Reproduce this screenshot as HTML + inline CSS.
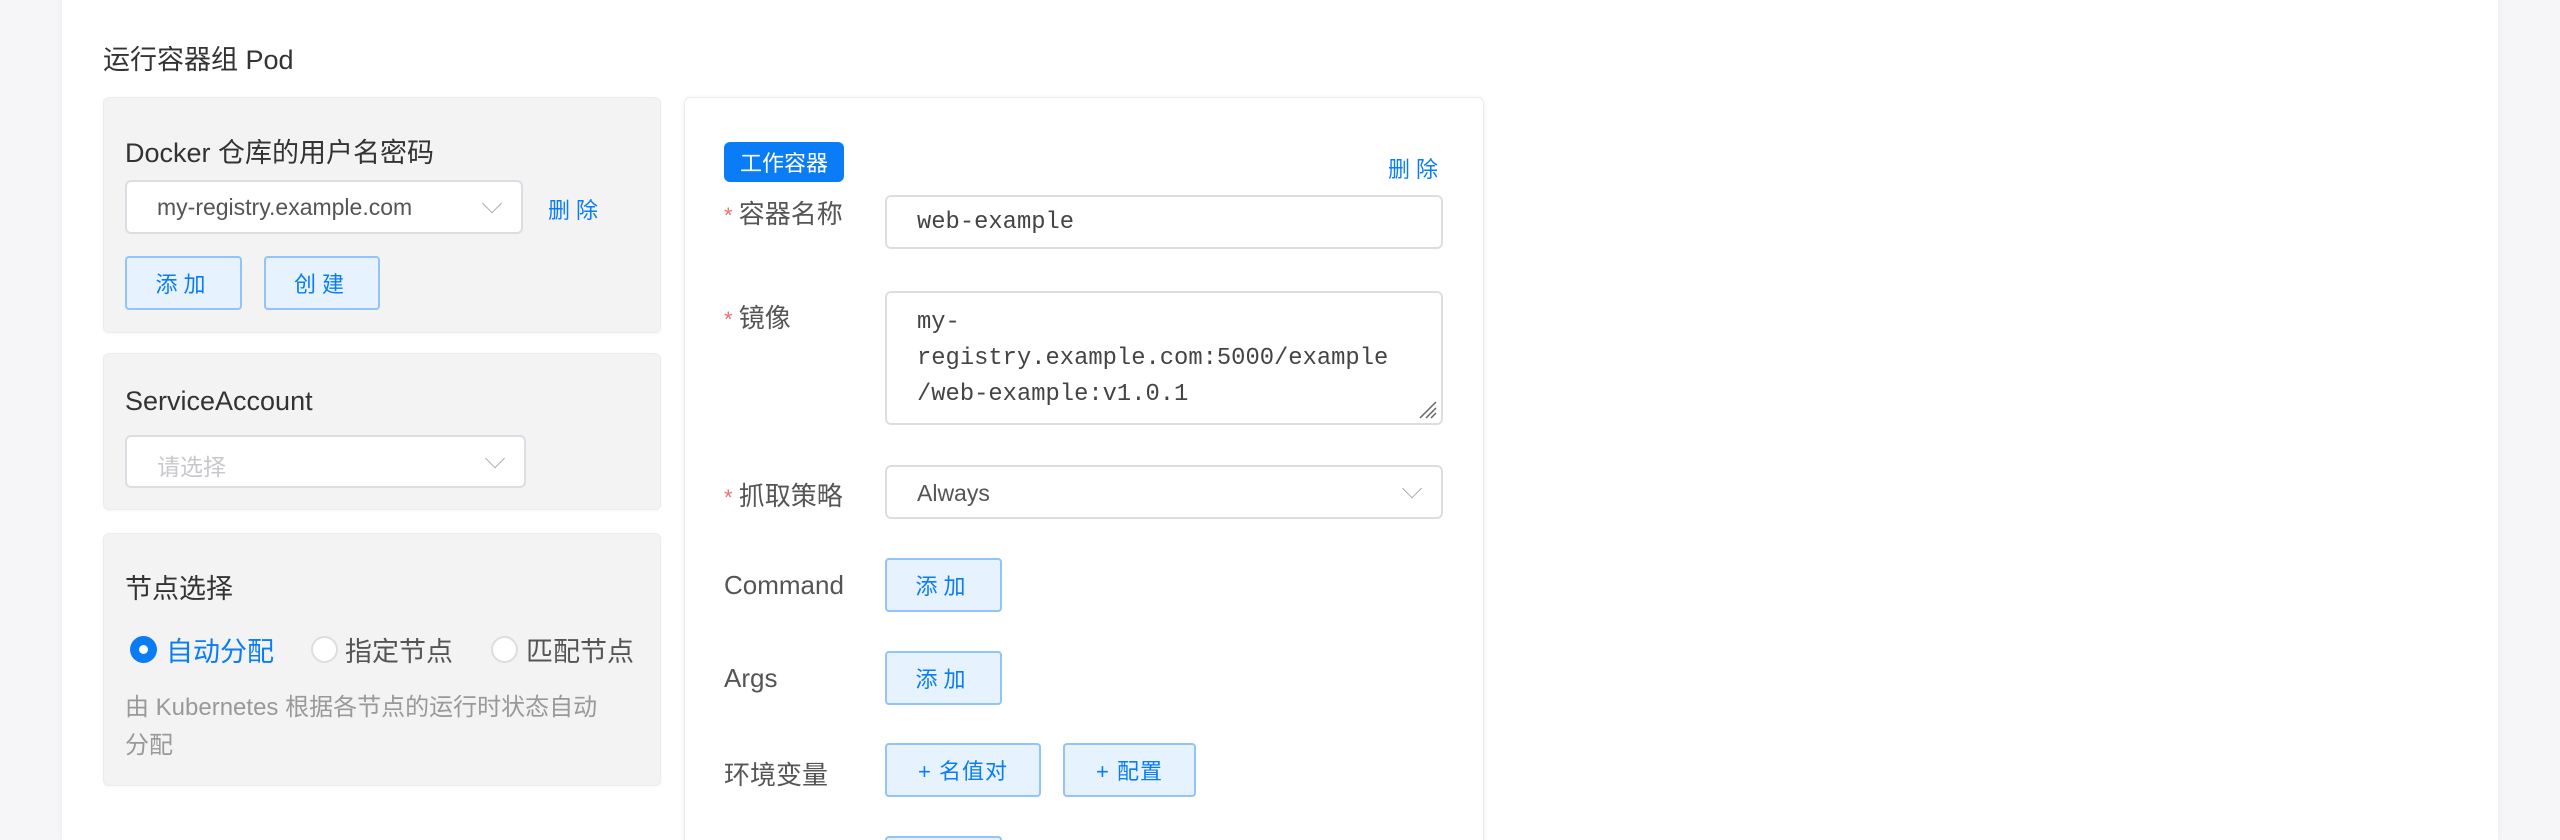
<!DOCTYPE html>
<html style="height:840px;overflow:hidden"><head><meta charset="utf-8"><style>
*{box-sizing:border-box;margin:0;padding:0}
body{width:2560px;height:840px;background:#f6f6f8;position:relative;overflow:hidden;font-family:"Liberation Sans","Noto Sans CJK SC",sans-serif;color:#333}
.a{position:absolute}
.card{left:62px;top:-10px;width:2436px;height:850px;background:#fff;box-shadow:0 0 6px rgba(0,0,0,.06)}
.panel{background:#f3f3f4;border:1px solid #ececee;border-radius:6px;left:103px;width:558px;box-shadow:0 1px 3px rgba(0,0,0,.04)}
.t{font-size:27px;color:#333;white-space:nowrap}
.sel{background:#fff;border:2px solid #dcdde2;border-radius:6px}
.chev{position:absolute;right:22px;top:50%;width:14px;height:14px;border-right:1.5px solid #aab;border-bottom:1.5px solid #aab;transform:translateY(-75%) rotate(45deg)}
.btn{background:#e6f2fe;border:2px solid #92c3f9;border-radius:4px;color:#0a7cf5;font-size:22px;display:flex;align-items:center;justify-content:center;letter-spacing:6px;white-space:nowrap}
.lbl{font-size:26px;color:#555;white-space:nowrap}
.star{color:#f56c6c;font-size:22px}
.blue{color:#0a7cf5}
.mono{font-family:"Liberation Mono","DejaVu Sans Mono",monospace;font-size:23.8px;color:#444}
</style></head><body>
<div class="a card"></div>
<div class="a t" style="left:103px;top:38px">运行容器组 Pod</div>

<div class="a panel" style="top:97px;height:236px"></div>
<div class="a t" style="left:125px;top:131px">Docker 仓库的用户名密码</div>
<div class="a sel" style="left:125px;top:180px;width:398px;height:54px"><span class="a" style="left:30px;top:12px;font-size:23px;color:#555">my-registry.example.com</span><i class="chev"></i></div>
<div class="a blue" style="left:548px;top:193px;font-size:22px;letter-spacing:6px">删除</div>
<div class="a btn" style="left:125px;top:256px;width:117px;height:54px">添加</div>
<div class="a btn" style="left:264px;top:256px;width:116px;height:54px">创建</div>

<div class="a panel" style="top:353px;height:157px"></div>
<div class="a t" style="left:125px;top:386px">ServiceAccount</div>
<div class="a sel" style="left:125px;top:435px;width:401px;height:53px"><span class="a" style="left:30px;top:11px;font-size:23px;color:#c8c8cc">请选择</span><i class="chev"></i></div>

<div class="a panel" style="top:533px;height:253px"></div>
<div class="a t" style="left:125px;top:567px">节点选择</div>
<div class="a" style="left:130px;top:636px;width:27px;height:27px;border-radius:50%;background:#0a7cf5"><div class="a" style="left:9px;top:9px;width:9px;height:9px;border-radius:50%;background:#fff"></div></div>
<div class="a blue" style="left:166px;top:630px;font-size:27px">自动分配</div>
<div class="a" style="left:311px;top:636px;width:27px;height:27px;border-radius:50%;background:#fff;border:2px solid #dcdde2"></div>
<div class="a" style="left:345px;top:630px;font-size:27px;color:#555">指定节点</div>
<div class="a" style="left:491px;top:636px;width:27px;height:27px;border-radius:50%;background:#fff;border:2px solid #dcdde2"></div>
<div class="a" style="left:526px;top:630px;font-size:27px;color:#555">匹配节点</div>
<div class="a" style="left:125px;top:689px;font-size:24px;line-height:38px;color:#999;white-space:nowrap">由 Kubernetes 根据各节点的运行时状态自动<br>分配</div>

<div class="a" style="left:684px;top:97px;width:800px;height:760px;background:#fff;border:1px solid #ececf0;border-radius:6px;box-shadow:0 1px 6px rgba(0,0,0,.06)"></div>
<div class="a" style="left:724px;top:142px;width:120px;height:40px;background:#0a7cf5;border-radius:6px;color:#fff;font-size:22px;display:flex;align-items:center;justify-content:center">工作容器</div>
<div class="a blue" style="left:1388px;top:152px;font-size:22px;letter-spacing:6px">删除</div>

<div class="a lbl" style="left:724px;top:194px"><span class="star">* </span>容器名称</div>
<div class="a sel" style="left:885px;top:195px;width:558px;height:54px"><span class="a mono" style="left:30px;top:12px">web-example</span></div>

<div class="a lbl" style="left:724px;top:298px"><span class="star">* </span>镜像</div>
<div class="a sel" style="left:885px;top:291px;width:558px;height:134px"><div class="a mono" style="left:30px;top:12px;line-height:36px">my-<br>registry.example.com:5000/example<br>/web-example:v1.0.1</div>
<svg class="a" style="right:3px;bottom:3px" width="20" height="20"><path d="M2 18L18 2M8 18L18 8M13 18L18 13" stroke="#666" stroke-width="1.5"/></svg></div>

<div class="a lbl" style="left:724px;top:476px"><span class="star">* </span>抓取策略</div>
<div class="a sel" style="left:885px;top:465px;width:558px;height:54px"><span class="a" style="left:30px;top:13px;font-size:23px;color:#555">Always</span><i class="chev"></i></div>

<div class="a lbl" style="left:724px;top:570px">Command</div>
<div class="a btn" style="left:885px;top:558px;width:117px;height:54px">添加</div>
<div class="a lbl" style="left:724px;top:663px">Args</div>
<div class="a btn" style="left:885px;top:651px;width:117px;height:54px">添加</div>
<div class="a lbl" style="left:724px;top:755px">环境变量</div>
<div class="a btn" style="left:885px;top:743px;width:156px;height:54px;letter-spacing:1px">+ 名值对</div>
<div class="a btn" style="left:1063px;top:743px;width:133px;height:54px;letter-spacing:1px">+ 配置</div>
<div class="a" style="left:885px;top:836px;width:117px;height:4px;background:#e6f2fe;border:2px solid #92c3f9;border-bottom:none;border-radius:4px 4px 0 0"></div>
</body></html>
